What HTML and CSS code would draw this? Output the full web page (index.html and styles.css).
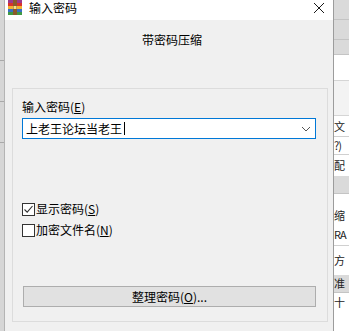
FILE: index.html
```html
<!DOCTYPE html>
<html lang="zh-CN">
<head>
  <meta charset="UTF-8">
  <title>输入密码</title>
  <link rel="stylesheet" href="styles.css">
</head>
<body>
<div class="screen">
  <div class="bg-left">
    <div class="bg-line"></div>
    <div class="bg-line"></div>
    <div class="bg-line"></div>
  </div>

  <div class="dialog">
    <div class="titlebar">
      <svg class="app-icon" width="16" height="16" viewBox="0 0 16 16">
        <rect x="1" y="0" width="14" height="3" fill="#9b3a8c"/>
        <rect x="1" y="3" width="14" height="3" fill="#d9322b"/>
        <rect x="1" y="6" width="14" height="3" fill="#f2b233"/>
        <rect x="1" y="9" width="14" height="3" fill="#3a6fc4"/>
        <rect x="1" y="12" width="14" height="3" fill="#3f9a45"/>
        <rect x="6" y="0" width="4" height="15" fill="#8a5a2b"/>
        <rect x="6.5" y="6" width="3" height="3" fill="#f6e08a"/>
      </svg>
      <span class="title">输入密码</span>
      <svg class="close" width="12" height="12" viewBox="0 0 12 12">
        <path d="M1 1 L11 11 M11 1 L1 11" stroke="#1a1a1a" stroke-width="1" fill="none"/>
      </svg>
    </div>

    <div class="content">
      <div class="heading">带密码压缩</div>

      <div class="group">
        <div class="label">输入密码(<u>E</u>)</div>
        <div class="combo">
          <span class="combo-text">上老王论坛当老王</span><span class="caret"></span>
          <svg class="chevron" width="10" height="6" viewBox="0 0 10 6">
            <path d="M1 1 L5 5 L9 1" stroke="#555" stroke-width="1" fill="none"/>
          </svg>
        </div>

        <div class="checks">
          <label class="check">
            <span class="box">
              <svg width="11" height="11" viewBox="0 0 11 11">
                <path d="M1.5 5.5 L4.2 8.2 L9.5 2" stroke="#333" stroke-width="1.1" fill="none"/>
              </svg>
            </span>
            <span>显示密码(<u>S</u>)</span>
          </label>
          <label class="check">
            <span class="box"></span>
            <span>加密文件名(<u>N</u>)</span>
          </label>
        </div>

        <button class="btn">整理密码(<u>O</u>)...</button>
      </div>
    </div>
  </div>

  <div class="bg-right">
    <div class="r-row r-gray" style="height:20px"></div>
    <div class="r-row r-gray" style="height:20px"></div>
    <div class="r-row r-gray" style="height:15px"></div>
    <div class="r-row" style="height:25px"></div>
    <div class="r-row r-box" style="height:36px"></div>
    <div class="r-row" style="height:20px"><span class="frag">文</span></div>
    <div class="r-row r-line" style="height:18px"><span class="frag">?)</span></div>
    <div class="r-row r-line" style="height:22px"><span class="frag">配</span></div>
    <div class="r-row r-gray" style="height:18px"></div>
    <div class="r-row" style="height:14px"></div>
    <div class="r-row" style="height:15px"><span class="frag">缩</span></div>
    <div class="r-row" style="height:22px"><span class="frag">RA</span></div>
    <div class="r-row r-line" style="height:30px"><span class="frag">方</span></div>
    <div class="r-row r-gray" style="height:18px"><span class="frag">准</span></div>
    <div class="r-row" style="height:18px"><span class="frag">十</span></div>
  </div>
</div>
</body>
</html>
```

FILE: styles.css
```css
* {
  margin: 0;
  padding: 0;
  box-sizing: border-box;
}

body {
  font-family: "Noto Sans CJK SC", "Noto Sans", sans-serif;
  font-size: 12px;
  color: #000;
  background: #fff;
}

u {
  text-decoration: underline;
  text-underline-offset: 1px;
}

.screen {
  display: flex;
  width: 349px;
  height: 331px;
  overflow: hidden;
}

/* background window strips */
.bg-left {
  width: 5px;
  flex: none;
  background: #d6d6d6;
  border-right: 1px solid #b4b4b4;
  display: flex;
  flex-direction: column;
  gap: 40px;
  padding-top: 60px;
}

.bg-line {
  height: 1px;
  background: #a9a9a9;
}

.bg-right {
  flex: 1;
  min-width: 0;
  background: #fff;
  border-left: 1px solid #9c9c9c;
  display: flex;
  flex-direction: column;
  overflow: hidden;
}

.r-row {
  flex: none;
  overflow: hidden;
  white-space: nowrap;
  display: flex;
  align-items: center;
}

.r-gray {
  background: #dadada;
  border-bottom: 1px solid #c4c4c4;
}

.r-line {
  border-top: 1px solid #d0d0d0;
}

.r-box {
  background: #f3f3f3;
  border-top: 1px solid #d5d5d5;
  border-bottom: 1px solid #d5d5d5;
}

.frag {
  font-size: 11px;
  line-height: 13px;
  letter-spacing: -1px;
  color: #222;
}

/* dialog */
.dialog {
  width: 328px;
  flex: none;
  display: flex;
  flex-direction: column;
  background: #f0f0f0;
}

.titlebar {
  height: 20px;
  background: #fff;
  display: flex;
  align-items: center;
  padding-left: 2px;
  position: relative;
}

.app-icon {
  margin-top: -5px;
}

.title {
  margin-left: 6px;
  line-height: 14px;
  margin-top: -4px;
}

.close {
  position: absolute;
  right: 8px;
  top: 2px;
}

.content {
  flex: 1;
  padding-top: 13px;
}

.heading {
  text-align: center;
  line-height: 14px;
  padding-left: 6px;
}

.group {
  margin: 41px 0 0 7px;
  width: 316px;
  border: 1px solid #dcdcdc;
  padding: 11px 0 14px 9px;
}

.label {
  line-height: 14px;
}

.combo {
  margin-top: 4px;
  width: 294px;
  height: 21px;
  background: #fff;
  border: 1px solid #0078d7;
  display: flex;
  align-items: center;
  padding-left: 3px;
  padding-right: 4px;
}

.combo-text {
  line-height: 14px;
}

.caret {
  width: 1px;
  height: 13px;
  background: #000;
  margin-left: 2px;
}

.chevron {
  margin-left: auto;
}

.checks {
  margin-top: 63px;
  display: flex;
  flex-direction: column;
  gap: 7px;
}

.check {
  display: flex;
  align-items: center;
  line-height: 14px;
  height: 14px;
}

.box {
  width: 13px;
  height: 13px;
  border: 1px solid #333;
  background: #fff;
  margin-right: 1px;
  display: flex;
  align-items: center;
  justify-content: center;
}

.btn {
  margin: 49px 0 0 1px;
  display: block;
  width: 293px;
  height: 21px;
  background: #e1e1e1;
  border: 1px solid #adadad;
  font-family: inherit;
  font-size: 12px;
  line-height: 14px;
  color: #000;
}
```
